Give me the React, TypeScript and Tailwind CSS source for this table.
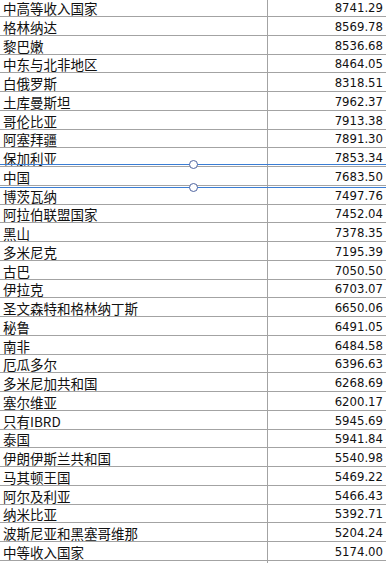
import React from "react";

const rows: [string, string][] = [
  ["中高等收入国家", "8741.29"],
  ["格林纳达", "8569.78"],
  ["黎巴嫩", "8536.68"],
  ["中东与北非地区", "8464.05"],
  ["白俄罗斯", "8318.51"],
  ["土库曼斯坦", "7962.37"],
  ["哥伦比亚", "7913.38"],
  ["阿塞拜疆", "7891.30"],
  ["保加利亚", "7853.34"],
  ["中国", "7683.50"],
  ["博茨瓦纳", "7497.76"],
  ["阿拉伯联盟国家", "7452.04"],
  ["黑山", "7378.35"],
  ["多米尼克", "7195.39"],
  ["古巴", "7050.50"],
  ["伊拉克", "6703.07"],
  ["圣文森特和格林纳丁斯", "6650.06"],
  ["秘鲁", "6491.05"],
  ["南非", "6484.58"],
  ["厄瓜多尔", "6396.63"],
  ["多米尼加共和国", "6268.69"],
  ["塞尔维亚", "6200.17"],
  ["只有IBRD", "5945.69"],
  ["泰国", "5941.84"],
  ["伊朗伊斯兰共和国", "5540.98"],
  ["马其顿王国", "5469.22"],
  ["阿尔及利亚", "5466.43"],
  ["纳米比亚", "5392.71"],
  ["波斯尼亚和黑塞哥维那", "5204.24"],
  ["中等收入国家", "5174.00"],
];

export default function App() {
  return (
    <div className="relative w-[386px] h-[563px] overflow-hidden bg-white text-[#111]">
      <div className="flex flex-col h-full">
        {rows.map(([name, val], i) => (
          <div
            key={i}
            className={
              "flex shrink-0 border-b border-[#a3a3a3] " +
              (i === 0 ? "h-[17px]" : "h-[18.76px]")
            }
          >
            <div className="w-[268px] shrink-0 border-r border-[#a3a3a3] flex items-end pl-[3px]">
              <span
                className="leading-[16px] text-[13.5px] whitespace-nowrap"
                style={{ fontFamily: '"Noto Sans CJK SC", "Noto Sans", sans-serif' }}
              >
                {name}
              </span>
            </div>
            <div className="flex-1 flex items-end justify-end pr-[3px]">
              <span
                className="leading-[16px] text-[13px] whitespace-nowrap"
                style={{ fontFamily: '"DejaVu Sans Condensed", "Liberation Sans", sans-serif' }}
              >
                {val}
              </span>
            </div>
          </div>
        ))}
        <div className="flex flex-1">
          <div className="w-[268px] border-r border-[#a3a3a3]" />
        </div>
      </div>

      {/* selection / drag indicator overlay */}
      <div className="absolute left-0 right-0 top-[164px] h-px bg-[#3b7dd3]" />
      <div className="absolute left-[189px] top-[160px] w-[9px] h-[9px] rounded-full border-[1.5px] border-[#4f64a0] bg-white" />
      <div className="absolute left-0 right-0 top-[187px] h-px bg-[#3b7dd3]" />
      <div className="absolute left-[189px] top-[183px] w-[9px] h-[9px] rounded-full border-[1.5px] border-[#4f64a0] bg-white" />
    </div>
  );
}
